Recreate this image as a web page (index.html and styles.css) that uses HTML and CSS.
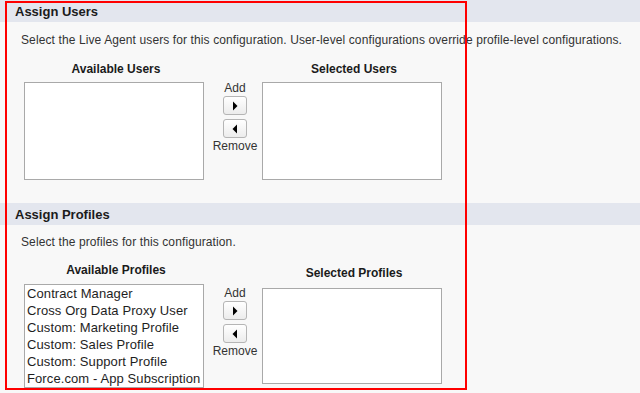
FILE: index.html
```html
<!DOCTYPE html>
<html>
<head>
<meta charset="utf-8">
<link rel="stylesheet" href="styles.css">
</head>
<body>
<div class="page">
  <section class="section">
    <div class="section-header">Assign Users</div>
    <p class="desc desc-users">Select the Live Agent users for this configuration. User-level configurations override profile-level configurations.</p>
    <div class="duel duel-users">
      <div class="col">
        <div class="col-label">Available Users</div>
        <div class="listbox lb-users"></div>
      </div>
      <div class="mid mid-users">
        <div class="mid-text">Add</div>
        <button class="arrow-btn" type="button"><svg width="6" height="10" viewBox="0 0 6 10"><path d="M1 0.5 L5.5 5 L1 9.5 Z" fill="#000"/></svg></button>
        <button class="arrow-btn arrow-btn-2" type="button"><svg width="6" height="10" viewBox="0 0 6 10"><path d="M5 0.5 L0.5 5 L5 9.5 Z" fill="#000"/></svg></button>
        <div class="mid-text">Remove</div>
      </div>
      <div class="col">
        <div class="col-label">Selected Users</div>
        <div class="listbox lb-users"></div>
      </div>
    </div>
  </section>
  <section class="section">
    <div class="section-header">Assign Profiles</div>
    <p class="desc desc-profiles">Select the profiles for this configuration.</p>
    <div class="duel duel-profiles">
      <div class="col">
        <div class="col-label">Available Profiles</div>
        <ul class="listbox lb-avail-profiles">
          <li>Contract Manager</li>
          <li>Cross Org Data Proxy User</li>
          <li>Custom: Marketing Profile</li>
          <li>Custom: Sales Profile</li>
          <li>Custom: Support Profile</li>
          <li>Force.com - App Subscription</li>
        </ul>
      </div>
      <div class="mid mid-profiles">
        <div class="mid-text">Add</div>
        <button class="arrow-btn" type="button"><svg width="6" height="10" viewBox="0 0 6 10"><path d="M1 0.5 L5.5 5 L1 9.5 Z" fill="#000"/></svg></button>
        <button class="arrow-btn arrow-btn-2" type="button"><svg width="6" height="10" viewBox="0 0 6 10"><path d="M5 0.5 L0.5 5 L5 9.5 Z" fill="#000"/></svg></button>
        <div class="mid-text">Remove</div>
      </div>
      <div class="col col-sel-profiles">
        <div class="col-label">Selected Profiles</div>
        <div class="listbox lb-sel-profiles"></div>
      </div>
    </div>
  </section>
  <div class="highlight"></div>
</div>
</body>
</html>
```

FILE: styles.css
```css
html, body {
  margin: 0;
  padding: 0;
  background: #f8f8f8;
}
body {
  font-family: "Liberation Sans", Arial, sans-serif;
  color: #333;
  font-size: 12px;
}
.page {
  position: relative;
  width: 640px;
  height: 393px;
  overflow: hidden;
}
.section-header {
  height: 22px;
  line-height: 23px;
  background: #e3e6ee;
  padding-left: 15px;
  font-weight: bold;
  font-size: 13px;
  color: #1b1b1b;
}
.desc {
  margin: 0;
  padding-left: 21px;
  line-height: 14px;
  font-size: 12px;
  letter-spacing: 0.11px;
  color: #333;
}
.desc-users { padding-top: 11px; }
.desc-profiles { padding-top: 10px; }
.duel {
  display: flex;
  align-items: flex-start;
  padding-left: 24px;
}
.duel-users { margin-top: 15px; height: 141px; }
.duel-profiles { margin-top: 14px; }
.col {
  width: 180px;
  display: flex;
  flex-direction: column;
}
.col-label {
  box-sizing: border-box;
  padding-left: 4px;
  text-align: center;
  font-weight: bold;
  font-size: 12px;
  line-height: 15px;
  color: #1b1b1b;
}
.listbox {
  box-sizing: border-box;
  background: #fff;
  border: 1px solid #a9a9a9;
  margin: 0;
  list-style: none;
}
.lb-users {
  margin-top: 5px;
  height: 98px;
}
.lb-avail-profiles {
  margin-top: 6px;
  height: 104px;
  padding: 0 0 0 2px;
  font-size: 13px;
  line-height: 17px;
  letter-spacing: 0.1px;
  color: #1e1e1e;
  white-space: nowrap;
  overflow: hidden;
}
.col-sel-profiles { margin-top: 3px; }
.lb-sel-profiles {
  margin-top: 7px;
  height: 96px;
}
.mid {
  box-sizing: border-box;
  width: 58px;
  padding-left: 4px;
  display: flex;
  flex-direction: column;
  align-items: center;
}
.mid-users { margin-top: 19px; }
.mid-profiles { margin-top: 23px; }
.mid-text {
  font-size: 12px;
  line-height: 15px;
  color: #333;
}
.arrow-btn {
  box-sizing: border-box;
  width: 24px;
  height: 19px;
  margin: 0;
  padding: 0;
  border: 1px solid #b5b5b5;
  border-radius: 3px;
  background: linear-gradient(#ffffff, #ececec);
  display: flex;
  align-items: center;
  justify-content: center;
}
.arrow-btn-2 { margin-top: 4px; margin-bottom: 1px; }
.highlight {
  position: absolute;
  left: 5px;
  top: 1px;
  width: 458px;
  height: 385px;
  border: 2px solid #ff0000;
  pointer-events: none;
}
```
